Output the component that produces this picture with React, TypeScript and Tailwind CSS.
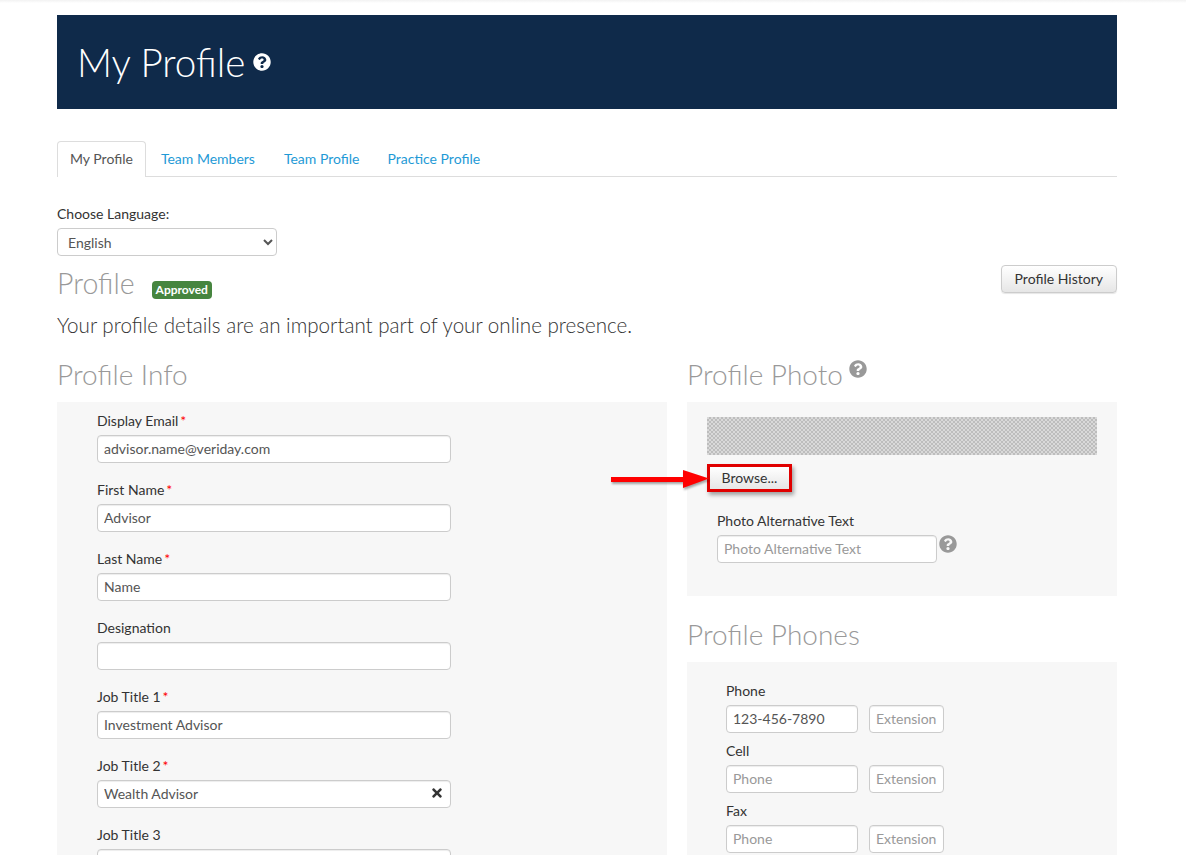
import { FaQuestionCircle, FaTimes } from 'react-icons/fa'

const inputClass = 'h-7 rounded border border-[#ccc] bg-white px-[6px] pb-[2px] text-sm text-[#555] placeholder:text-[#999] outline-none shadow-[inset_0_1px_1px_rgba(0,0,0,0.075)]'

const Required = () => <span className="ml-[2px] text-[#f00]">*</span>

function Field({ label, value, required, clearable }: { label: string; value?: string; required?: boolean; clearable?: boolean }) {
  return (
    <div className="mb-[17px]">
      <label className="mb-[5px] block h-[19px] text-sm leading-[19px] text-[#333]">
        {label}
        {required && <Required />}
      </label>
      <div className="relative w-[354px]">
        <input readOnly value={value ?? ''} className={`${inputClass} block w-full`} />
        {clearable && <FaTimes className="absolute right-[7px] top-[6px] h-[14px] w-[14px] text-[#333]" />}
      </div>
    </div>
  )
}

function PhoneRow({ label, value }: { label: string; value?: string }) {
  return (
    <div className="mb-[8px]">
      <label className="mb-[5px] block h-[19px] text-sm leading-[19px] text-[#333]">{label}</label>
      <div className="flex gap-[11px]">
        <input readOnly value={value ?? ''} placeholder="Phone" className={`${inputClass} w-[132px]`} />
        <input readOnly placeholder="Extension" className={`${inputClass} w-[75px]`} />
      </div>
    </div>
  )
}

function Arrow() {
  return (
    <svg className="absolute left-[-100px] top-0 h-[30px] w-[106px]" viewBox="0 0 106 30">
      <path d="M4 13 H76 V6 L102 14.5 L76 24 V18 H4 Z" fill="#f00" style={{ filter: 'drop-shadow(1px 2px 1px rgba(0,0,0,0.35))' }} />
    </svg>
  )
}

export default function App() {
  return (
    <div className="h-[855px] overflow-hidden bg-white font-['Lato','Liberation_Sans',sans-serif] text-sm text-[#333]">
      <div className="h-[3px] bg-gradient-to-b from-[#f2f2f2] to-white" />
      <div className="ml-[57px] w-[1060px] pt-[12px]">
        <div className="flex h-[94px] items-center bg-[#0f2a4a] pl-5">
          <h1 className="text-[38.6px] leading-none font-light text-white">My Profile</h1>
          <FaQuestionCircle className="ml-[8px] h-[18px] w-[18px] text-white" />
        </div>

        <div className="mt-[32px] flex h-[36px] border-b border-[#ddd]">
          <div className="h-[36px] rounded-t border border-b-0 border-[#ddd] bg-white px-3 leading-[34px] text-[#555]">My Profile</div>
          <a className="ml-[3px] px-3 leading-[35px] text-[#1f9ad6]">Team Members</a>
          <a className="ml-[5px] px-3 leading-[35px] text-[#1f9ad6]">Team Profile</a>
          <a className="ml-[4px] px-3 leading-[35px] text-[#1f9ad6]">Practice Profile</a>
        </div>

        <label className="mt-[27px] block h-[19px] leading-[19px]">Choose Language:</label>
        <select className="mt-[5px] block h-7 w-[220px] rounded border border-[#ccc] bg-white px-[6px] text-sm text-[#555]">
          <option>English</option>
        </select>

        <div className="mt-[8px] flex h-[40px] items-center">
          <h2 className="mb-[2px] text-[28.5px] leading-none font-light text-[#999]">Profile</h2>
          <span className="mt-[11px] ml-[17px] rounded bg-[#46853f] px-[4px] text-xs leading-[18px] font-bold text-white">Approved</span>
          <button className="mt-[-10px] ml-auto h-7 rounded border border-[#ccc] bg-gradient-to-b from-white to-[#e6e6e6] px-[13px] text-sm text-[#333] shadow-[0_1px_1px_rgba(0,0,0,0.1)]">Profile History</button>
        </div>
        <p className="mt-[7px] text-[20.6px] leading-[28px] font-light text-[#333]">Your profile details are an important part of your online presence.</p>

        <div className="mt-[14px] flex gap-5">
          <div className="w-[610px]">
            <h2 className="h-[44px] text-[28px] leading-[42px] font-light text-[#999]">Profile Info</h2>
            <div className="mt-[5px] h-[600px] bg-[#f7f7f7] pt-[9px] pl-10">
              <Field label="Display Email" value="advisor.name@veriday.com" required />
              <Field label="First Name" value="Advisor" required />
              <Field label="Last Name" value="Name" required />
              <Field label="Designation" />
              <Field label="Job Title 1" value="Investment Advisor" required />
              <Field label="Job Title 2" value="Wealth Advisor" required clearable />
              <Field label="Job Title 3" />
            </div>
          </div>

          <div className="w-[430px]">
            <div className="flex h-[44px] items-start">
              <h2 className="text-[28px] leading-[42px] font-light text-[#999]">Profile Photo</h2>
              <FaQuestionCircle className="mt-[7px] ml-[6px] h-[18px] w-[18px] text-[#999]" />
            </div>
            <div className="mt-[5px] h-[194px] bg-[#f7f7f7] px-5 pt-[15px]">
              <div className="h-[38px] w-[390px] bg-[repeating-conic-gradient(#bdbdbd_0_25%,#d9d9d9_0_50%)] bg-[length:4px_4px]" />
              <div className="relative mt-[9px] w-fit">
                <button className="relative h-7 w-[85px] border-[3px] border-[#e00000] bg-gradient-to-b from-white to-[#e6e6e6] text-sm text-[#333] shadow-[2px_3px_4px_rgba(0,0,0,0.35)]">Browse...</button>
                <Arrow />
              </div>
              <label className="mt-[19px] ml-[10px] block h-[19px] leading-[19px]">Photo Alternative Text</label>
              <div className="mt-[5px] ml-[10px] flex items-start">
                <input readOnly placeholder="Photo Alternative Text" className={`${inputClass} w-[220px]`} />
                <FaQuestionCircle className="ml-[2px] h-[18px] w-[18px] text-[#999]" />
              </div>
            </div>

            <h2 className="mt-[17px] h-[44px] text-[28px] leading-[42px] font-light text-[#999]">Profile Phones</h2>
            <div className="mt-[5px] h-[300px] bg-[#f7f7f7] pt-[19px] pl-[39px]">
              <PhoneRow label="Phone" value="123-456-7890" />
              <PhoneRow label="Cell" />
              <PhoneRow label="Fax" />
            </div>
          </div>
        </div>
      </div>
    </div>
  )
}
